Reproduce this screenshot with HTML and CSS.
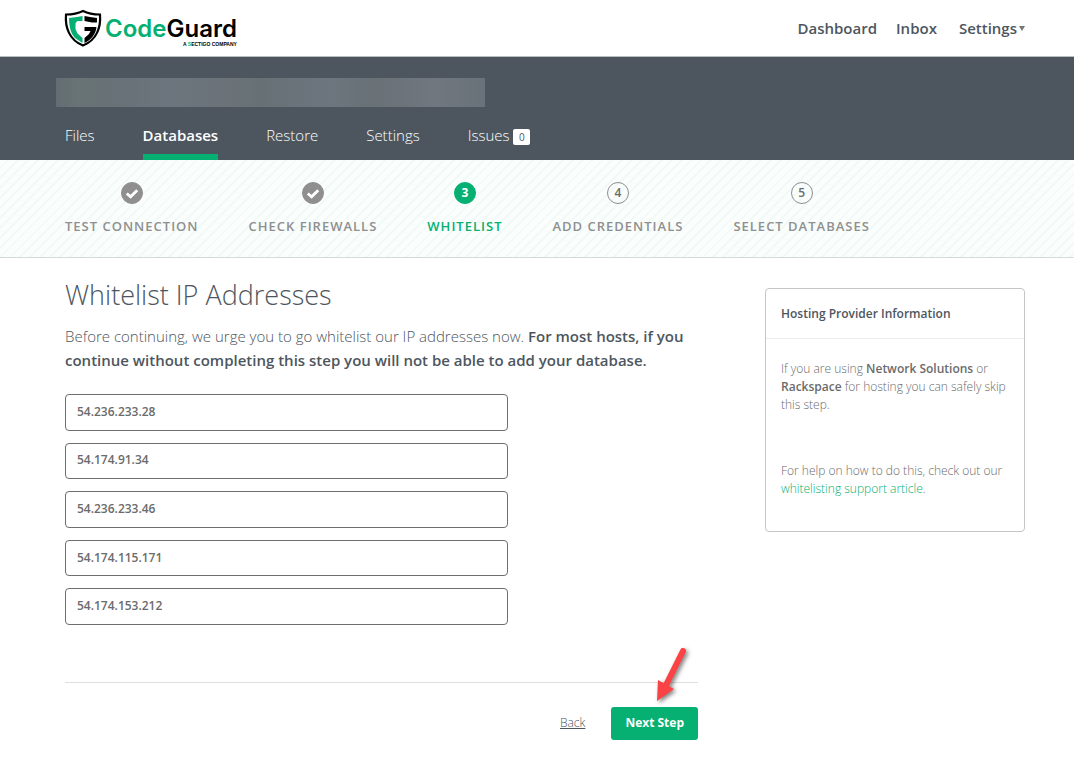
FILE: index.html
```html
<!DOCTYPE html>
<html lang="en">
<head>
    <meta charset="UTF-8">
    <meta name="viewport" content="width=device-width, initial-scale=1.0">
    <title>CodeGuard - Whitelist IP Addresses</title>
    <link rel="stylesheet" href="styles.css">
</head>
<body>

    <header class="topbar">
        <a href="#" class="logo" aria-label="CodeGuard">
            <svg class="logo-shield" viewBox="0 0 38 38" aria-hidden="true">
                <path d="M19 2C24 4.500 30 5.500 36 5.500C37 18 33 31 19 36.500C5 31 1 18 2 5.500C8 5.500 14 4.500 19 2Z" fill="#fff" stroke="#000" stroke-width="2.200"/>
                <path d="M18.500 7L13 8L5 9C5 18 7 25 11 29L18.500 34V29L13.500 24.500L11.500 20V14L13.500 12H18.500Z" fill="#05b072"/>
                <path d="M20.500 7L26 8L33 9V13.500H28L20.500 12ZM20.500 18H32.500C32 25 27 31 20.500 34V29L25 25L26.500 22H20.500Z" fill="#000"/>
            </svg>
            <span class="logo-text">
                <span class="logo-name"><span class="green">Code</span>Guard</span>
                <span class="logo-tag">A <span class="green">S</span>ECTIGO COMPANY</span>
            </span>
        </a>
        <nav class="main-nav">
            <a href="#">Dashboard</a>
            <a href="#">Inbox</a>
            <a href="#" class="has-menu">Settings<span class="caret"></span></a>
        </nav>
    </header>

    <div class="site-bar">
        <div class="site-name"></div>
        <nav class="tabs">
            <a href="#">Files</a>
            <a href="#" class="active">Databases</a>
            <a href="#">Restore</a>
            <a href="#">Settings</a>
            <a href="#">Issues <span class="count">0</span></a>
        </nav>
    </div>

    <ol class="steps">
        <li class="done">
            <span class="bullet"><svg viewBox="0 0 21 21" aria-hidden="true"><path d="M5 10.500L9 14L16 7"/></svg></span>
            Test Connection
        </li>
        <li class="done">
            <span class="bullet"><svg viewBox="0 0 21 21" aria-hidden="true"><path d="M5 10.500L9 14L16 7"/></svg></span>
            Check Firewalls
        </li>
        <li class="current"><span class="bullet">3</span>Whitelist</li>
        <li><span class="bullet">4</span>Add Credentials</li>
        <li><span class="bullet">5</span>Select Databases</li>
    </ol>

    <main class="content">
        <form class="whitelist">
            <h1>Whitelist IP Addresses</h1>
            <p class="intro">Before continuing, we urge you to go whitelist our IP addresses now. <strong>For most hosts, if you continue without completing this step you will not be able to add your database.</strong></p>

            <div class="addresses">
                <input type="text" aria-label="IP address 1" value="54.236.233.28" readonly>
                <input type="text" aria-label="IP address 2" value="54.174.91.34" readonly>
                <input type="text" aria-label="IP address 3" value="54.236.233.46" readonly>
                <input type="text" aria-label="IP address 4" value="54.174.115.171" readonly>
                <input type="text" aria-label="IP address 5" value="54.174.153.212" readonly>
            </div>

            <div class="actions">
                <a href="#">Back</a>
                <button type="button">Next Step</button>
                <svg class="arrow" viewBox="0 0 44 64" aria-hidden="true">
                    <path d="M34 8L17 42" stroke="#fb4346" stroke-width="6" stroke-linecap="round"/>
                    <path d="M8 58L9 37L25 46Z" fill="#fb4346"/>
                </svg>
            </div>
        </form>

        <aside class="info">
            <h2>Hosting Provider Information</h2>
            <div class="info-body">
                <p>If you are using <strong>Network Solutions</strong> or <strong>Rackspace</strong> for hosting you can safely skip this step.</p>
                <p>For help on how to do this, check out our <a href="#">whitelisting support article</a>.</p>
            </div>
        </aside>
    </main>

</body>
</html>
```

FILE: styles.css
```css
* {
    box-sizing: border-box;
}

body {
    font-family: "Open Sans", sans-serif;
    font-size: 15px;
    color: #4d565e;
    background: #fff;
    margin: 0;
}

a {
    color: inherit;
    text-decoration: none;
}

.green {
    color: #05b072;
}

/* top bar */
.topbar {
    display: flex;
    justify-content: space-between;
    align-items: center;
    height: 57px;
    padding: 0 49px 0 64px;
    border-bottom: 1px solid #b9bec0;
}

.logo {
    display: flex;
    align-items: center;
    gap: 3px;
    color: #000;
}

.logo-shield {
    width: 38px;
    height: 38px;
}

.logo-text {
    display: flex;
    flex-direction: column;
    align-items: flex-end;
    padding-top: 8px;
}

.logo-name {
    font-family: Inter, sans-serif;
    font-size: 24px;
    font-weight: 600;
    line-height: 24px;
}

.logo-tag {
    font-family: "Liberation Sans", sans-serif;
    font-size: 5px;
    font-weight: 700;
    line-height: 6px;
}

.main-nav {
    display: flex;
    gap: 19px;
    font-weight: 600;
}

.has-menu {
    display: flex;
    align-items: center;
    margin-left: 3px;
}

.caret {
    border: 3px solid transparent;
    border-top: 5px solid #777;
    border-bottom: 0;
    margin-left: 2px;
}

/* site bar */
.site-bar {
    background: #4d565e;
    color: #fff;
    padding: 21px 49px 0 65px;
}

.site-name {
    width: 429px;
    max-width: 100%;
    height: 29px;
    margin-left: -9px;
    background: linear-gradient(90deg, #636c73, #687475 5%, #677176 12%, #6c747d 26%, #6b7379 40%, #677175 48%, #6d757f 64%, #687176 73%, #70777f 88%, #697279);
}

.tabs {
    display: flex;
    gap: 48px;
    margin-top: 14px;
    font-weight: 300;
}

.tabs a {
    height: 39px;
    line-height: 28px;
}

.tabs .active {
    font-weight: 600;
    border-bottom: 6px solid #05b072;
}

.count {
    display: inline-block;
    min-width: 17px;
    padding: 0 4px;
    border-radius: 2px;
    background: #fff;
    color: #4d565e;
    font-size: 10px;
    font-weight: 400;
    line-height: 16px;
    text-align: center;
}

/* wizard steps */
.steps {
    display: flex;
    gap: 50px;
    height: 98px;
    margin: 0;
    padding: 22px 49px 0 65px;
    list-style: none;
    border-bottom: 1px solid #d5dada;
    background: repeating-linear-gradient(135deg, #fafffd 0, #fafffd 5px, #f3f9f7 5px, #f3f9f7 7px);
    color: #8f8f8f;
    font-size: 13px;
    font-weight: 600;
    line-height: 16px;
    letter-spacing: 1px;
    text-transform: uppercase;
}

.steps li {
    display: flex;
    flex-direction: column;
    align-items: center;
    gap: 14px;
}

.bullet {
    display: flex;
    justify-content: center;
    align-items: center;
    width: 22px;
    height: 22px;
    border: 1px solid #8f8f8f;
    border-radius: 50%;
    color: #6b6b6b;
    font-size: 12px;
    letter-spacing: 0;
}

.bullet svg {
    width: 21px;
    height: 21px;
    fill: none;
    stroke: #fff;
    stroke-width: 3;
}

.done .bullet {
    background: #8f8f8f;
}

.current {
    color: #05b072;
}

.current .bullet {
    background: #05b072;
    border-color: #05b072;
    color: #fff;
    font-weight: 700;
}

/* content */
.content {
    display: flex;
    align-items: flex-start;
    gap: 67px;
    padding: 18px 49px 30px 65px;
}

.whitelist {
    flex: 1;
}

h1 {
    margin: 0;
    font-size: 27px;
    font-weight: 300;
    line-height: 38px;
}

.intro {
    margin: 10px 0 22px;
    font-weight: 300;
    line-height: 24px;
}

strong {
    font-weight: 600;
}

.addresses {
    display: grid;
    grid-auto-rows: 1fr;
    gap: 12px;
    width: 70%;
    height: 231px;
}

.addresses input {
    width: 100%;
    padding: 0 11px 2px;
    border: 1px solid #6e6e73;
    border-radius: 4px;
    color: #6b6b6b;
    font-family: inherit;
    font-size: 12px;
    font-weight: 600;
}

.actions {
    position: relative;
    display: flex;
    justify-content: flex-end;
    align-items: baseline;
    gap: 26px;
    margin-top: 57px;
    padding-top: 24px;
    border-top: 1px solid #dedede;
    font-size: 12px;
    font-weight: 300;
}

.actions a {
    text-decoration: underline;
}

.actions button {
    height: 33px;
    padding: 0 14px 2px;
    border: none;
    border-radius: 3px;
    background: #05b072;
    color: #fff;
    font-family: inherit;
    font-size: 12px;
    font-weight: 700;
    cursor: pointer;
}

/* pointer over the button */
.arrow {
    position: absolute;
    top: -40px;
    right: 5px;
    width: 44px;
    height: 64px;
    filter: drop-shadow(2px 2px 2px rgba(0, 0, 0, 0.5));
    pointer-events: none;
}

.info {
    width: 260px;
    margin-top: 12px;
    border: 1px solid #c3c5c7;
    border-radius: 4px;
    font-size: 12px;
}

.info h2 {
    margin: 0;
    padding: 16px 15px 15px;
    border-bottom: 1px solid #ededed;
    font-size: 12px;
    font-weight: 600;
    line-height: 18px;
}

.info-body {
    padding: 21px 15px 33px;
    color: #6b6b6b;
    font-weight: 300;
    line-height: 18px;
}

.info p {
    margin: 0;
}

.info p + p {
    margin-top: 48px;
}

.info p a {
    color: #05b072;
}
```
